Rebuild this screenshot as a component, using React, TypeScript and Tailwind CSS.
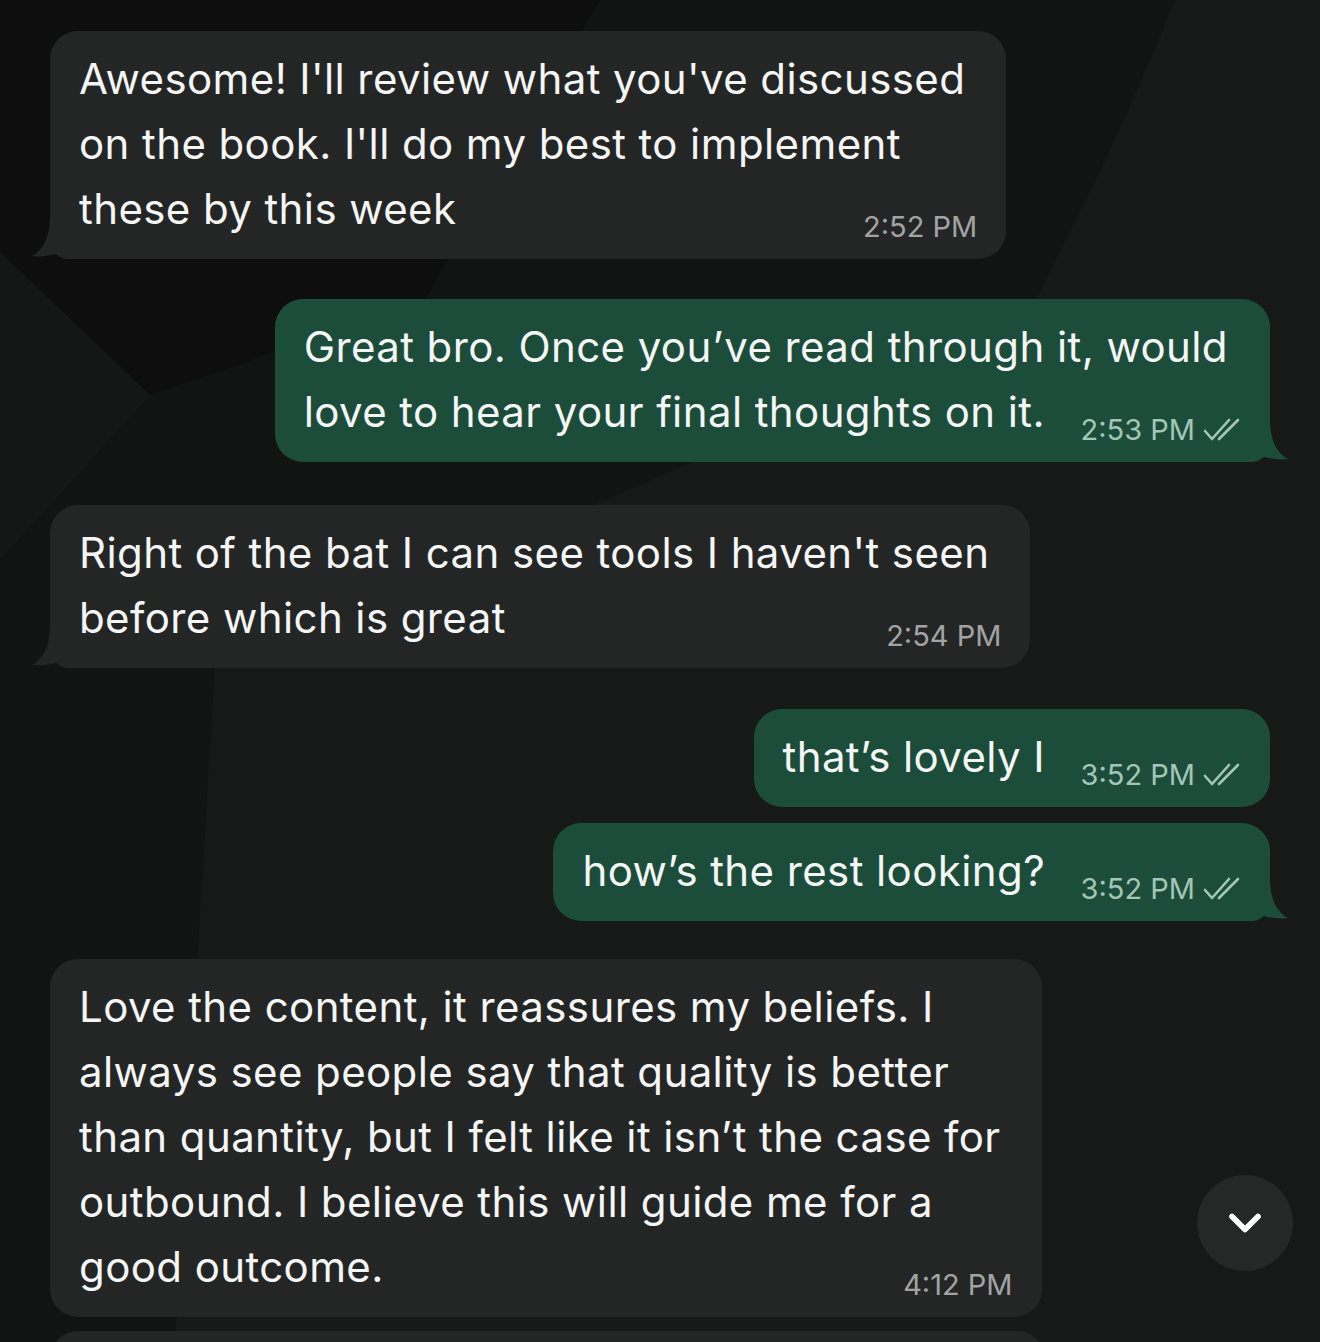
import React from "react";
import { ChevronDown } from "lucide-react";

type Msg = {
  id: number;
  side: "in" | "out";
  lines: string[];
  time: string;
  tail: boolean;
  gap: string;
};

const messages: Msg[] = [
  {
    id: 1,
    side: "in",
    lines: [
      "Awesome! I'll review what you've discussed",
      "on the book. I'll do my best to implement",
      "these by this week",
    ],
    time: "2:52 PM",
    tail: true,
    gap: "mt-[31px]",
  },
  {
    id: 2,
    side: "out",
    lines: [
      "Great bro. Once you\u2019ve read through it, would",
      "love to hear your final thoughts on it.",
    ],
    time: "2:53 PM",
    tail: true,
    gap: "mt-[40px]",
  },
  {
    id: 3,
    side: "in",
    lines: ["Right of the bat I can see tools I haven't seen", "before which is great"],
    time: "2:54 PM",
    tail: true,
    gap: "mt-[43px]",
  },
  {
    id: 4,
    side: "out",
    lines: ["that\u2019s lovely I"],
    time: "3:52 PM",
    tail: false,
    gap: "mt-[41px]",
  },
  {
    id: 5,
    side: "out",
    lines: ["how\u2019s the rest looking?"],
    time: "3:52 PM",
    tail: true,
    gap: "mt-[16px]",
  },
  {
    id: 6,
    side: "in",
    lines: [
      "Love the content, it reassures my beliefs. I",
      "always see people say that quality is better",
      "than quantity, but I felt like it isn\u2019t the case for",
      "outbound. I believe this will guide me for a",
      "good outcome.",
    ],
    time: "4:12 PM",
    tail: false,
    gap: "mt-[38px]",
  },
];

const Tail: React.FC<{ side: "in" | "out" }> = ({ side }) => (
  <svg
    width="46"
    height="44"
    viewBox="0 0 46 44"
    className={
      side === "in"
        ? "absolute left-[-18px] bottom-0 text-[#242626]"
        : "absolute right-[-18px] bottom-0 scale-x-[-1] text-[#1c4d3b]"
    }
  >
    <path
      d="M18 0 C18 22 12 34 0 41 C8 42 16 41 24 39 C27 41 30 44 36 44 L46 44 L46 0 Z"
      fill="currentColor"
    />
  </svg>
);

const Ticks = () => (
  <svg width="40" height="26" viewBox="0 0 40 26" fill="none" className="ml-[7px]">
    <path d="M3 14 L10 22 L27 3" stroke="currentColor" strokeWidth="2.6" strokeLinecap="round" strokeLinejoin="round" />
    <path d="M17 22 L36 3" stroke="currentColor" strokeWidth="2.6" strokeLinecap="round" />
  </svg>
);

const Bubble: React.FC<{ m: Msg }> = ({ m }) => {
  const out = m.side === "out";
  return (
    <div className={`flex ${out ? "justify-end" : "justify-start"} ${m.gap}`}>
      <div
        className={`relative rounded-[28px] pl-[29px] pr-[41px] pt-[15px] pb-[18px] ${
          out ? "bg-[#1c4d3b]" : "bg-[#242626]"
        }`}
      >
        {m.tail && <Tail side={m.side} />}
        <p className="relative whitespace-nowrap text-[42px] leading-[65px] tracking-[0.4px] text-[#f4f5f5]">
          {m.lines.map((l, i) => (
            <React.Fragment key={i}>
              {l}
              {i < m.lines.length - 1 && <br />}
            </React.Fragment>
          ))}
          <span className={`inline-block ${out ? "w-[184px]" : "w-[150px]"}`} />
        </p>
        <div
          className={`absolute bottom-[18px] flex items-center text-[29px] leading-none ${
            out ? "right-[28px] text-[#a3c6b6]" : "right-[29px] text-[#a2a4a4]"
          }`}
        >
          <span>{m.time}</span>
          {out && <Ticks />}
        </div>
      </div>
    </div>
  );
};

export default function App() {
  return (
    <div className="relative h-[1342px] w-[1320px] overflow-hidden bg-[#171818] font-['Inter','Noto_Sans',sans-serif]">
      <svg
        className="absolute inset-0"
        width="1320"
        height="1342"
        viewBox="0 0 1320 1342"
      >
        <path
          d="M0 0 L1175 0 Q1110 160 1035 300 Q700 470 215 660 Q195 1000 175 1342 L0 1342 Z"
          fill="#121313"
        />
        <path d="M0 0 L600 0 Q510 150 425 300 L150 395 L0 252 Z" fill="#0e0e0e" />
        <path d="M0 252 L150 395 L0 560 Z" fill="#151616" />
      </svg>

      <div className="relative flex flex-col px-[50px]">
        {messages.map((m) => (
          <Bubble key={m.id} m={m} />
        ))}
        {/* next message, cut off by the screen edge */}
        <div className="mt-[14px] h-[60px] w-[995px] rounded-[28px] bg-[#242626]" />
      </div>

      <button className="absolute left-[1197px] top-[1175px] flex h-[96px] w-[96px] items-center justify-center rounded-full bg-[#262828]">
        <ChevronDown size={52} strokeWidth={2.6} className="text-white" />
      </button>
    </div>
  );
}
